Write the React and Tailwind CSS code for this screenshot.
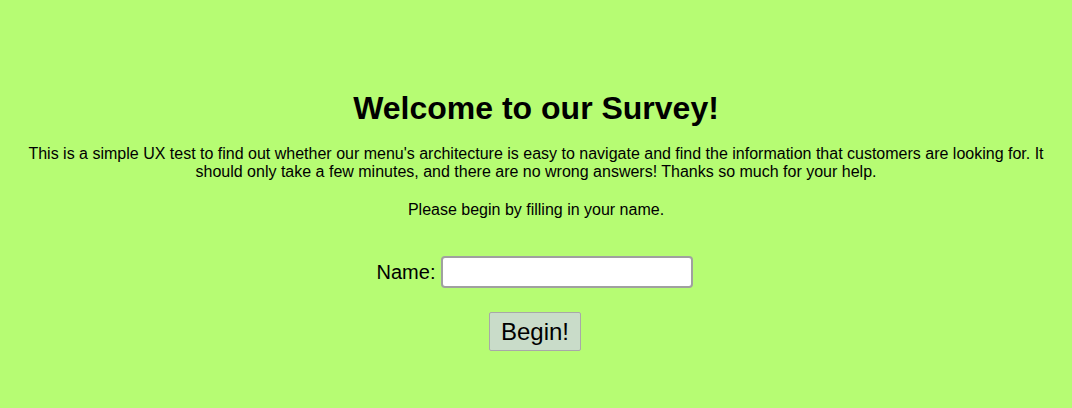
export default function App() {
  return (
    <div className="min-h-[408px] w-full bg-[#b6fc73] text-black text-center font-['Liberation_Sans',Arial,sans-serif] pt-[90px]">
      <h1 className="text-[32px] font-bold leading-[37px] mb-[18px]">Welcome to our Survey!</h1>
      <p className="text-[16px] leading-[18px] px-[8px]">
        This is a simple UX test to find out whether our menu's architecture is easy to navigate and find the information that customers are looking for. It should only take a few minutes, and there are no wrong answers! Thanks so much for your help.
      </p>
      <p className="text-[16px] leading-[18px] mt-[20px]">Please begin by filling in your name.</p>
      <div className="mt-[37px] flex items-center justify-center gap-[6px] pr-[2px]">
        <label className="text-[20px] leading-[23px]">Name:</label>
        <input type="text" className="w-[252px] h-[32px] bg-white border-2 border-[#a0a0a0] rounded-[4px] outline-none" />
      </div>
      <div className="mt-[24px] flex justify-center pr-[2px]">
        <button className="w-[92px] h-[39px] bg-[#c9dcc9] border border-[#a8a8a8] rounded-[2px] text-[24px] leading-[28px]">Begin!</button>
      </div>
    </div>
  );
}
